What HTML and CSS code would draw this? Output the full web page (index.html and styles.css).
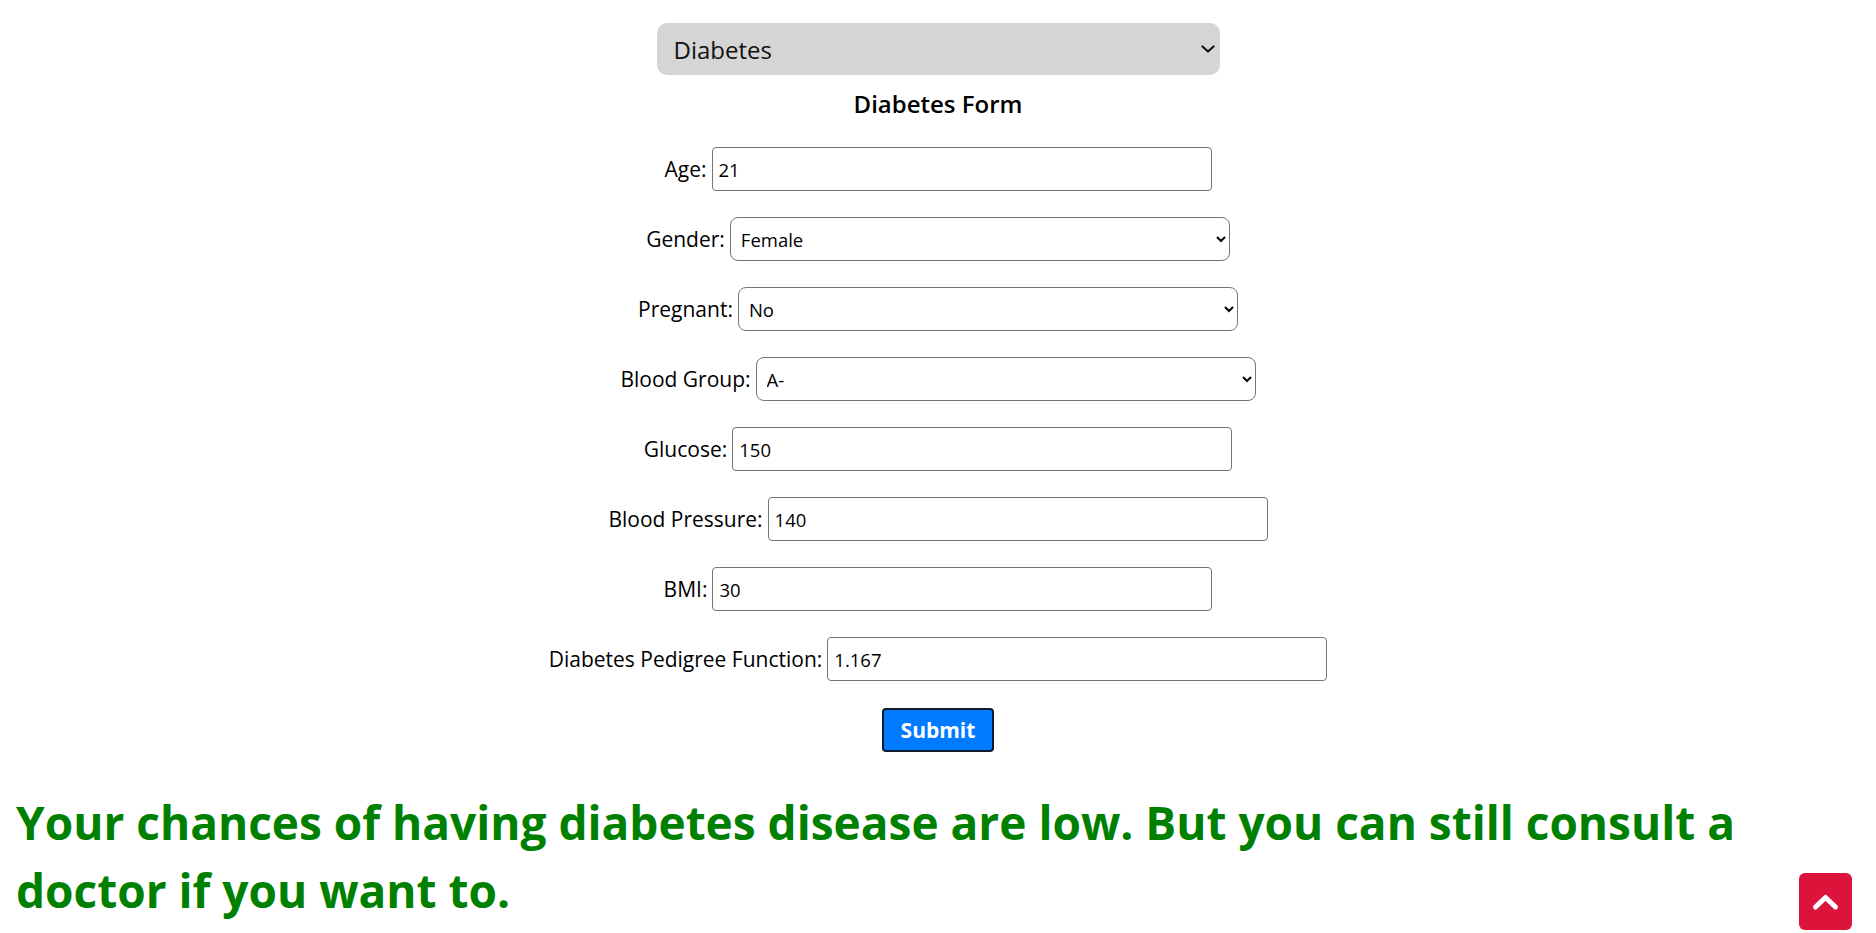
FILE: index.html
```html
<!DOCTYPE html>
<html lang="en">
<head>
<meta charset="utf-8">
<title>Diabetes Form</title>
<link rel="stylesheet" href="styles.css">
</head>
<body>
<main class="page">
  <div class="select-wrap">
    <select class="disease-select">
      <option>Diabetes</option>
      <option>Heart Disease</option>
    </select>
    <svg class="select-arrow" width="14" height="8" viewBox="0 0 14 8"><polyline points="1.5,1.5 7,6.5 12.5,1.5" fill="none" stroke="#111" stroke-width="2.2" stroke-linecap="round" stroke-linejoin="round"/></svg>
  </div>
  <h3 class="form-title">Diabetes Form</h3>
  <form class="form">
    <div class="row"><label>Age:</label><input class="field" type="text" value="21"></div>
    <div class="row"><label>Gender:</label><select class="field sel"><option>Female</option><option>Male</option></select></div>
    <div class="row"><label>Pregnant:</label><select class="field sel"><option>No</option><option>Yes</option></select></div>
    <div class="row"><label>Blood Group:</label><select class="field sel"><option>A-</option><option>A+</option></select></div>
    <div class="row"><label>Glucose:</label><input class="field" type="text" value="150"></div>
    <div class="row"><label>Blood Pressure:</label><input class="field" type="text" value="140"></div>
    <div class="row"><label>BMI:</label><input class="field" type="text" value="30"></div>
    <div class="row"><label>Diabetes Pedigree Function:</label><input class="field" type="text" value="1.167"></div>
    <div class="row"><button class="submit" type="button">Submit</button></div>
  </form>
  <p class="result">Your chances of having diabetes disease are low. But you can still consult a doctor if you want to.</p>
</main>
<button class="to-top" type="button" aria-label="Back to top">
  <svg width="53" height="57" viewBox="0 0 53 57"><polyline points="16.5,34 26.5,24.5 36.5,34" fill="none" stroke="#fff" stroke-width="5" stroke-linecap="round" stroke-linejoin="round"/></svg>
</button>
</body>
</html>
```

FILE: styles.css
```css
* { box-sizing: border-box; }
html, body { margin: 0; padding: 0; background: #fff; }
body {
  font-family: "Open Sans", "Noto Sans", sans-serif;
  color: #000;
}
.page {
  padding-top: 23px;
  display: flex;
  flex-direction: column;
  align-items: center;
}
.select-wrap {
  position: relative;
  width: 563px;
  height: 52px;
}
.disease-select {
  display: block;
  width: 100%;
  height: 52px;
  background: #d6d5d6;
  border: none;
  border-radius: 10px;
  font-family: inherit;
  font-size: 24px;
  color: #111;
  padding: 0 30px 0 17px;
  outline: none;
  appearance: none;
  -webkit-appearance: none;
}
.select-arrow {
  position: absolute;
  right: 5px;
  top: 22px;
  pointer-events: none;
}
.form-title {
  margin: 14px 0 0;
  font-size: 24px;
  line-height: 30px;
  font-weight: 600;
}
.form {
  margin-top: 28px;
  display: flex;
  flex-direction: column;
  align-items: center;
  gap: 26px;
  width: 100%;
}
.row {
  display: flex;
  align-items: center;
  justify-content: center;
  gap: 5px;
  font-size: 21px;
  height: 44px;
}
.row label { white-space: nowrap; }
.field {
  width: 500px;
  height: 44px;
  border: 1px solid #767676;
  border-radius: 4px;
  font-family: inherit;
  font-size: 18.5px;
  color: #000;
  padding: 0 6px;
  background: #fff;
}
.sel {
  border-radius: 8px;
  padding: 0 8px 0 6px;
}
.submit {
  width: 112px;
  height: 44px;
  margin-top: 1px;
  background: #007bff;
  color: #fff;
  border: 2px solid #0d1b2e;
  border-radius: 4px;
  font-family: inherit;
  font-weight: 700;
  font-size: 21px;
  padding: 0;
}
.result {
  align-self: stretch;
  max-width: 1790px;
  margin: 37px 0 0;
  padding: 0 16px;
  font-size: 46px;
  line-height: 68px;
  font-weight: 700;
  color: #008000;
}
.to-top {
  position: fixed;
  right: 24px;
  bottom: 3px;
  width: 53px;
  height: 57px;
  padding: 0;
  border: none;
  border-radius: 6px;
  background: #dc143c;
  display: flex;
  align-items: center;
  justify-content: center;
}
.to-top svg { display: block; }
```
